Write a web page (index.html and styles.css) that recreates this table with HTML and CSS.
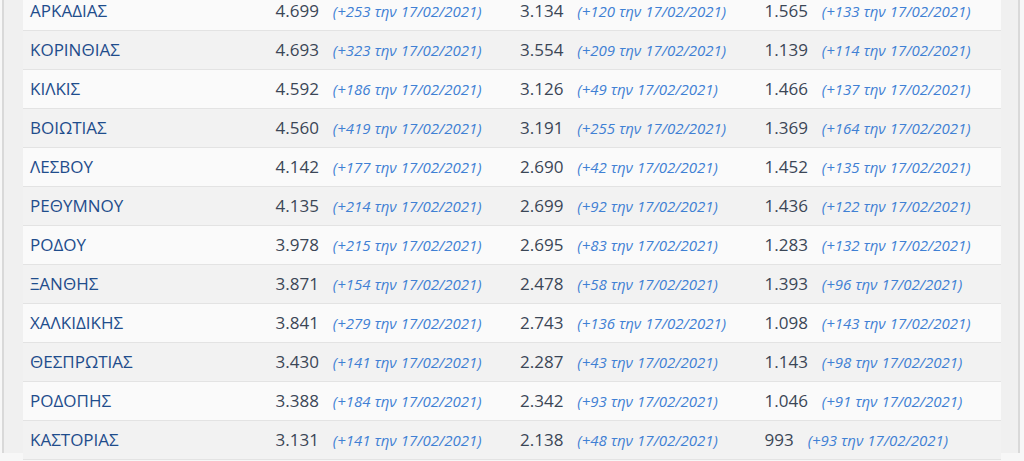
FILE: index.html
```html
<!DOCTYPE html>
<html lang="el">
<head>
    <meta charset="UTF-8">
    <meta name="viewport" content="width=device-width, initial-scale=1.0">
    <title>Κρούσματα ανά νομό</title>
    <link rel="stylesheet" href="styles.css">
</head>
<body>
<div class="frame">
    <table class="cases">
        <tr><td>ΑΡΚΑΔΙΑΣ</td><td>4.699<span class="diff">(+253 την 17/02/2021)</span></td><td>3.134<span class="diff">(+120 την 17/02/2021)</span></td><td>1.565<span class="diff">(+133 την 17/02/2021)</span></td></tr>
        <tr><td>ΚΟΡΙΝΘΙΑΣ</td><td>4.693<span class="diff">(+323 την 17/02/2021)</span></td><td>3.554<span class="diff">(+209 την 17/02/2021)</span></td><td>1.139<span class="diff">(+114 την 17/02/2021)</span></td></tr>
        <tr><td>ΚΙΛΚΙΣ</td><td>4.592<span class="diff">(+186 την 17/02/2021)</span></td><td>3.126<span class="diff">(+49 την 17/02/2021)</span></td><td>1.466<span class="diff">(+137 την 17/02/2021)</span></td></tr>
        <tr><td>ΒΟΙΩΤΙΑΣ</td><td>4.560<span class="diff">(+419 την 17/02/2021)</span></td><td>3.191<span class="diff">(+255 την 17/02/2021)</span></td><td>1.369<span class="diff">(+164 την 17/02/2021)</span></td></tr>
        <tr><td>ΛΕΣΒΟΥ</td><td>4.142<span class="diff">(+177 την 17/02/2021)</span></td><td>2.690<span class="diff">(+42 την 17/02/2021)</span></td><td>1.452<span class="diff">(+135 την 17/02/2021)</span></td></tr>
        <tr><td>ΡΕΘΥΜΝΟΥ</td><td>4.135<span class="diff">(+214 την 17/02/2021)</span></td><td>2.699<span class="diff">(+92 την 17/02/2021)</span></td><td>1.436<span class="diff">(+122 την 17/02/2021)</span></td></tr>
        <tr><td>ΡΟΔΟΥ</td><td>3.978<span class="diff">(+215 την 17/02/2021)</span></td><td>2.695<span class="diff">(+83 την 17/02/2021)</span></td><td>1.283<span class="diff">(+132 την 17/02/2021)</span></td></tr>
        <tr><td>ΞΑΝΘΗΣ</td><td>3.871<span class="diff">(+154 την 17/02/2021)</span></td><td>2.478<span class="diff">(+58 την 17/02/2021)</span></td><td>1.393<span class="diff">(+96 την 17/02/2021)</span></td></tr>
        <tr><td>ΧΑΛΚΙΔΙΚΗΣ</td><td>3.841<span class="diff">(+279 την 17/02/2021)</span></td><td>2.743<span class="diff">(+136 την 17/02/2021)</span></td><td>1.098<span class="diff">(+143 την 17/02/2021)</span></td></tr>
        <tr><td>ΘΕΣΠΡΩΤΙΑΣ</td><td>3.430<span class="diff">(+141 την 17/02/2021)</span></td><td>2.287<span class="diff">(+43 την 17/02/2021)</span></td><td>1.143<span class="diff">(+98 την 17/02/2021)</span></td></tr>
        <tr><td>ΡΟΔΟΠΗΣ</td><td>3.388<span class="diff">(+184 την 17/02/2021)</span></td><td>2.342<span class="diff">(+93 την 17/02/2021)</span></td><td>1.046<span class="diff">(+91 την 17/02/2021)</span></td></tr>
        <tr><td>ΚΑΣΤΟΡΙΑΣ</td><td>3.131<span class="diff">(+141 την 17/02/2021)</span></td><td>2.138<span class="diff">(+48 την 17/02/2021)</span></td><td>993<span class="diff">(+93 την 17/02/2021)</span></td></tr>
    </table>
</div>
</body>
</html>
```

FILE: styles.css
```css
body {
    margin: 0;
    padding: 0 4px 0 2px;
    background-color: #f7f7f7;
    font-family: "Open Sans", sans-serif;
    height: 461px;
    overflow: hidden;
}
.frame {
    background-color: #f0f0f0;
    border-left: 2px solid #d9d9d9;
    border-right: 2px solid #d9d9d9;
    padding: 0 17px 0 19px;
    height: 461px;
}
.cases {
    width: 100%;
    border-collapse: collapse;
    table-layout: fixed;
    margin-top: -8px;
}
.cases td {
    padding: 8px 7px 8px 8px;
    height: 22px;
    line-height: 22px;
    font-size: 17px;
    color: #3b4656;
    border-bottom: 1px solid #e3e3e3;
    white-space: nowrap;
}
.cases td:first-child {
    padding-left: 7px;
    color: #1f4d8c;
}
.cases tr:nth-child(odd) { background-color: #fafafa; }
.cases tr:nth-child(even) { background-color: #f2f2f2; }
.diff {
    font-style: italic;
    font-size: 15px;
    line-height: 16px;
    color: #3f80d4;
    margin-left: 14px;
}
```
